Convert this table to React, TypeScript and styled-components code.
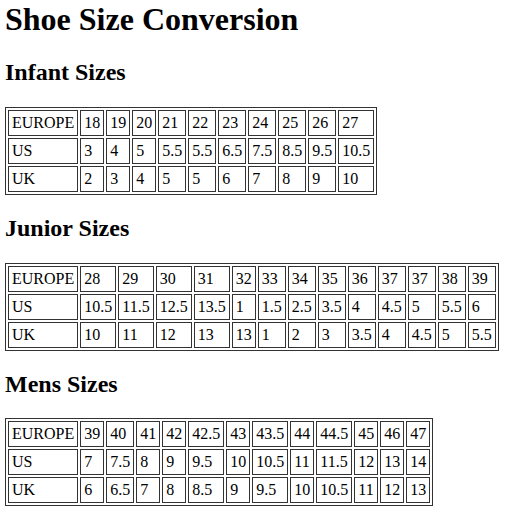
import React from "react";
import styled, { createGlobalStyle } from "styled-components";

interface SizeChart {
  id: string;
  title: string;
  europe: string[];
  us: string[];
  uk: string[];
}

const charts: SizeChart[] = [
  {
    id: "infant",
    title: "Infant Sizes",
    europe: ["18", "19", "20", "21", "22", "23", "24", "25", "26", "27"],
    us: ["3", "4", "5", "5.5", "5.5", "6.5", "7.5", "8.5", "9.5", "10.5"],
    uk: ["2", "3", "4", "5", "5", "6", "7", "8", "9", "10"],
  },
  {
    id: "junior",
    title: "Junior Sizes",
    europe: ["28", "29", "30", "31", "32", "33", "34", "35", "36", "37", "37", "38", "39"],
    us: ["10.5", "11.5", "12.5", "13.5", "1", "1.5", "2.5", "3.5", "4", "4.5", "5", "5.5", "6"],
    uk: ["10", "11", "12", "13", "13", "1", "2", "3", "3.5", "4", "4.5", "5", "5.5"],
  },
  {
    id: "mens",
    title: "Mens Sizes",
    europe: ["39", "40", "41", "42", "42.5", "43", "43.5", "44", "44.5", "45", "46", "47"],
    us: ["7", "7.5", "8", "9", "9.5", "10", "10.5", "11", "11.5", "12", "13", "14"],
    uk: ["6", "6.5", "7", "8", "8.5", "9", "9.5", "10", "10.5", "11", "12", "13"],
  },
];

const GlobalStyle = createGlobalStyle`
  html, body {
    margin: 0;
    padding: 0;
    background: #ffffff;
  }
  body {
    font-family: "Liberation Serif", "Times New Roman", serif;
    color: #000000;
  }
`;

const Page = styled.div`
  padding: 1px 5px 0;
`;

const Title = styled.h1`
  font-size: 32px;
  font-weight: bold;
  margin: 0 0 21.44px;
`;

const SectionTitle = styled.h2`
  font-size: 24px;
  font-weight: bold;
  margin: 20.4px 0;
`;

const SizeTable = styled.table`
  border-collapse: separate;
  border-spacing: 2px;
  border: 1px solid #333333;
  font-size: 16px;
`;

const Cell = styled.td`
  border: 1px solid #333333;
  padding: 3px;
  text-align: left;
  vertical-align: middle;
  white-space: nowrap;
`;

const rowsOf = (chart: SizeChart) => [
  { label: "EUROPE", values: chart.europe },
  { label: "US", values: chart.us },
  { label: "UK", values: chart.uk },
];

export default function App() {
  return (
    <Page>
      <GlobalStyle />
      <Title>Shoe Size Conversion</Title>
      {charts.map((chart) => (
        <section key={chart.id}>
          <SectionTitle>{chart.title}</SectionTitle>
          <SizeTable>
            <tbody>
              {rowsOf(chart).map((row) => (
                <tr key={row.label}>
                  <Cell>{row.label}</Cell>
                  {row.values.map((v, i) => (
                    <Cell key={i}>{v}</Cell>
                  ))}
                </tr>
              ))}
            </tbody>
          </SizeTable>
        </section>
      ))}
    </Page>
  );
}
